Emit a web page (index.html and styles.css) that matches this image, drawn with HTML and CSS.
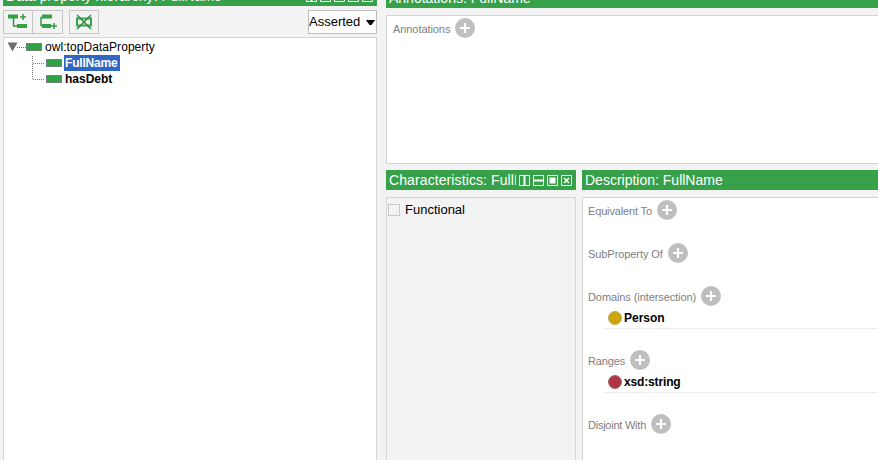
FILE: index.html
```
<!DOCTYPE html>
<html lang="en">
<head>
<meta charset="utf-8">
<title>Data properties</title>
<link rel="stylesheet" href="styles.css">
</head>
<body>
<svg class="defs" width="0" height="0">
  <symbol id="split-v" viewBox="0 0 11 11"><path d="M.5.5h10v10H.5z" fill="none" stroke="#fff"/><path d="M4.500 1h2v9h-2z" fill="#fff"/></symbol>
  <symbol id="split-h" viewBox="0 0 11 11"><path d="M.5.5h10v10H.5z" fill="none" stroke="#fff"/><path d="M1 4.500h9v2H1z" fill="#fff"/></symbol>
  <symbol id="float" viewBox="0 0 11 11"><path d="M.5.5h10v10H.5z" fill="none" stroke="#fff"/><path d="M2.500 2.500h6v6h-6z" fill="#fff"/></symbol>
  <symbol id="close" viewBox="0 0 11 11"><path d="M.5.5h10v10H.5z" fill="none" stroke="#fff"/><path d="M3 3l5 5M8 3l-5 5" stroke="#fff" stroke-width="1.5"/></symbol>
  <symbol id="plus" viewBox="0 0 20 20"><circle cx="10" cy="10" r="10" fill="#bfbfbf"/><path d="M10 5v10M5 10h10" stroke="#fff" stroke-width="2.2"/></symbol>
</svg>
<div class="app">
  <section class="hierarchy">
    <header class="bar"><span class="bar-title t-hier">Data property hierarchy: FullName</span>
      <span class="tools"><svg><use href="#split-v"/></svg><svg><use href="#float"/></svg><svg><use href="#split-h"/></svg><svg><use href="#float"/></svg><svg><use href="#close"/></svg></span>
    </header>
    <div class="toolbar">
      <button class="tool"><svg width="20" height="16" viewBox="0 0 20 16"><path d="M0 .5h10v4H0zM9 10h10v4H9z" fill="#36a047"/><path d="M5.500 4v8H10M12 3h6M15 0v6" fill="none" stroke="#36964a" stroke-width="1.5"/></svg></button>
      <button class="tool joined"><svg width="20" height="16" viewBox="0 0 20 16"><path d="M4 .5h10v4H4zM4 10h9v4H4z" fill="#36a047"/><path d="M5 3.500H3v8H5M13 12h6M16 9v6" fill="none" stroke="#36964a" stroke-width="1.5"/></svg></button>
      <button class="tool apart"><svg width="18" height="16" viewBox="0 0 18 16"><path d="M2 4.500h14v7H2z" fill="none" stroke="#38a64b" stroke-width="2"/><path d="M2 1l14 14M16 1L2 15" stroke="#338b45" stroke-width="1.6"/></svg></button>
      <div class="select"><span>Asserted</span><svg width="9" height="5"><path d="M0 0h9L5.500 5h-2z"/></svg></div>
    </div>
    <div class="tree">
      <svg class="guides" width="48" height="48" viewBox="0 0 48 48"><path d="M3.500 4.500h10l-5 9z" fill="#6d6d6d"/><path d="M13 9.500h9M28.500 18v24M29 25.500h11M29 41.500h11" fill="none" stroke="#777" stroke-dasharray="1 1"/></svg>
      <div class="node root"><i class="prop"></i><span class="t-top">owl:topDataProperty</span></div>
      <div class="node child"><i class="prop"></i><span class="selected"><span class="t-full">FullName</span></span></div>
      <div class="node child"><i class="prop"></i><span>hasDebt</span></div>
    </div>
  </section>
  <div class="details">
    <section class="annotations">
      <header class="bar"><span class="bar-title">Annotations: FullName</span></header>
      <div class="panel"><div class="head"><span>Annotations</span><svg><use href="#plus"/></svg></div></div>
    </section>
    <div class="lower">
      <section class="characteristics">
        <header class="bar"><span class="bar-title t-char">Characteristics: FullName</span>
          <span class="tools"><svg><use href="#split-v"/></svg><svg><use href="#split-h"/></svg><svg><use href="#float"/></svg><svg><use href="#close"/></svg></span>
        </header>
        <div class="panel"><label class="check"><i></i><span>Functional</span></label></div>
      </section>
      <section class="description">
        <header class="bar"><span class="bar-title">Description: FullName</span></header>
        <div class="panel">
          <div class="group"><div class="head"><span class="l-eq">Equivalent To</span><svg><use href="#plus"/></svg></div></div>
          <div class="group"><div class="head"><span>SubProperty Of</span><svg><use href="#plus"/></svg></div></div>
          <div class="group filled"><div class="head"><span class="l-dom">Domains (intersection)</span><svg><use href="#plus"/></svg></div>
            <div class="item"><i class="dot class-dot"></i><span>Person</span></div></div>
          <div class="group filled"><div class="head"><span class="l-ran">Ranges</span><svg><use href="#plus"/></svg></div>
            <div class="item"><i class="dot type-dot"></i><span class="t-xsd">xsd:string</span></div></div>
          <div class="group"><div class="head"><span class="l-dis">Disjoint With</span><svg><use href="#plus"/></svg></div></div>
        </div>
      </section>
    </div>
  </div>
</div>
</body>
</html>
```
FILE: styles.css
```
* { box-sizing: border-box; }
body { margin: 0; background: #f3f3f3; font: 12px/16px "Liberation Sans", Arial, sans-serif; color: #000; overflow: hidden; }
.defs { display: block; height: 0; }
.app { display: flex; gap: 9px; width: 878px; height: 460px; padding-left: 3px; overflow: hidden; }
.hierarchy { width: 374px; flex: none; display: flex; flex-direction: column; margin-top: -14px; }
.bar { height: 20px; flex: none; display: flex; align-items: center; background: #36a149; color: #fff; font-size: 14px; padding: 0 4px 0 3px; }
.bar-title { flex: 1; min-width: 0; overflow: hidden; white-space: nowrap; line-height: 20px; }
.t-hier { letter-spacing: .06px; }
.t-char { letter-spacing: .1px; margin-right: 3px; }
.tools { display: flex; gap: 3px; }
.tools svg { width: 11px; height: 11px; display: block; }
.toolbar { display: flex; height: 24px; margin: 4px 0 3px; }
.tool { width: 30px; height: 24px; padding: 0; border: 1px solid #c6c6c6; background: #f3f3f3; display: flex; align-items: center; justify-content: center; }
.joined { border-left: 0; }
.apart { margin-left: 6px; }
.select { width: 69px; margin-left: auto; border: 1px solid #bebebe; background: #fff; display: flex; align-items: center; justify-content: space-between; padding: 0 1px 0 0; font-size: 13px; }
.tree { position: relative; flex: 1; background: #fff; border: 1px solid #d5d5d5; border-bottom: 0; padding-top: 1px; }
.guides { position: absolute; left: 0; top: 0; }
.node { display: flex; align-items: center; height: 16px; line-height: 17px; }
.root { padding-left: 22px; }
.child { padding-left: 42px; font-weight: bold; }
.prop { width: 16px; height: 8px; background: #31a146; border: 1px solid #71867a; margin-right: 3px; flex: none; }
.t-top { letter-spacing: .06px; }
.t-full { letter-spacing: -.2px; }
.selected { background: #3067c4; color: #fff; height: 16px; width: 56px; margin-left: -1px; padding-left: 1px; }
.details { flex: 1; min-width: 0; display: flex; flex-direction: column; }
.panel { border: 1px solid #d5d5d5; }
.annotations { margin-top: -12px; }
.annotations .panel { height: 149px; margin-top: 7px; background: #fff; border-right: 0; padding: 2px 0 0 6px; }
.head { display: flex; align-items: center; height: 20px; color: #808080; font-size: 11px; letter-spacing: -.07px; gap: 5px; white-space: nowrap; }
.head svg { width: 20px; height: 20px; flex: none; }
.head span { padding-top: 2px; }
.l-eq { letter-spacing: -.15px; }
.l-dom { letter-spacing: -.09px; }
.l-ran { letter-spacing: -.15px; }
.l-dis { letter-spacing: -.24px; }
.lower { display: flex; flex: 1; gap: 6px; margin-top: 6px; }
.lower section { display: flex; flex-direction: column; }
.characteristics { width: 190px; flex: none; }
.description { flex: 1; min-width: 0; }
.lower .panel { flex: 1; margin-top: 7px; border-bottom: 0; }
.characteristics .panel { padding: 4px 0 0 1px; }
.check { display: flex; align-items: center; gap: 5px; height: 16px; font-size: 13px; }
.check i { width: 12px; height: 12px; border: 1px solid #c8c8c8; }
.description .panel { background: #fff; border-right: 0; padding: 2px 0 0 5px; }
.group { height: 43px; }
.group.filled { height: 64px; }
.item { display: flex; align-items: center; height: 23px; margin-left: 15px; padding: 1px 0 0 5px; border-bottom: 1px solid #ececec; font-weight: bold; }
.dot { width: 14px; height: 14px; border-radius: 50%; margin-right: 2px; }
.t-xsd { letter-spacing: -.15px; }
.class-dot { background: #cfa408; border: 1px solid #b9a86a; }
.type-dot { background: #b03643; border: 1px solid #a76870; }
```
